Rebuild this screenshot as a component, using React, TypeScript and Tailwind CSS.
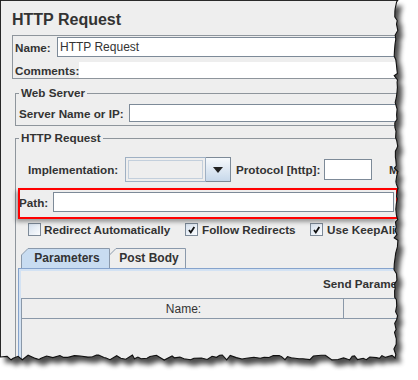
import React from 'react';

// torn-paper outline of the screenshot (right and bottom edges)
const makeTorn = () => {
  let s = 11;
  const rnd = () => {
    s = (s * 9301 + 49297) % 233280;
    return s / 233280;
  };
  const pts: string[] = ['M0 0', 'L398 0'];
  for (let y = 2; y < 355; y += 2 + rnd() * 5) {
    const x = 396 + (rnd() - 0.5) * 4 - (y > 330 ? 1 : 0);
    pts.push(`L${x.toFixed(1)} ${y.toFixed(1)}`);
  }
  pts.push('L395 358');
  for (let x = 392; x > 2; x -= 2 + rnd() * 6) {
    const y = 357.5 + (rnd() - 0.5) * 5;
    pts.push(`L${x.toFixed(1)} ${y.toFixed(1)}`);
  }
  pts.push('L0 357', 'Z');
  return pts.join(' ');
};

const TORN = makeTorn();

const TornEdge: React.FC = () => (
  <svg className="absolute inset-0 pointer-events-none" width={418} height={380}>
    <defs>
      <clipPath id="outside">
        <path clipRule="evenodd" d={`M0 0H418V380H0Z ${TORN}`} />
      </clipPath>
      <filter id="soft" x="-10%" y="-10%" width="120%" height="120%">
        <feGaussianBlur stdDeviation="2.6" />
      </filter>
    </defs>
    <g clipPath="url(#outside)">
      <rect width={418} height={380} fill="#fff" />
      <path d={TORN} transform="translate(5 6)" fill="#000" opacity={0.7} filter="url(#soft)" />
    </g>
    <path d={TORN} fill="none" stroke="#111" strokeWidth={1.1} />
  </svg>
);

const Check: React.FC<{ on?: boolean }> = ({ on }) => (
  <div className="w-[13px] h-[13px] border border-[#7d8a98] bg-gradient-to-br from-[#d6e1ee] to-[#fbfcfe] flex items-center justify-center shrink-0">
    {on && (
      <svg width="11" height="11" viewBox="0 0 11 11">
        <path d="M3 6 L4.8 8.5 L8.3 3" fill="none" stroke="#111" strokeWidth="1.8" />
      </svg>
    )}
  </div>
);

const Tab: React.FC<{ label: string; w: number; active?: boolean; className?: string }> = ({ label, w, active, className }) => (
  <div className={`relative h-[20px] flex items-center justify-center ${className ?? ''}`} style={{ width: w }}>
    <svg className="absolute inset-0" width={w} height={20}>
      <path
        d={`M0.5 20 L0.5 7 L7 0.5 L${w - 0.5} 0.5 L${w - 0.5} 20`}
        fill={active ? '#c8dcf1' : '#eeeeee'}
        stroke="#8a99ab"
      />
    </svg>
    <span className="relative pl-[3px] text-[12px] font-bold">{label}</span>
  </div>
);

export default function App() {
  return (
    <div className="relative w-[418px] h-[380px] bg-white overflow-hidden font-['Liberation_Sans',Arial,sans-serif] text-[#333]">
      <div className="w-[418px] h-[380px] bg-[#eeeeee] border-l border-t border-[#444]">
        <div className="pl-[11px] pt-[9px] text-[16px] font-bold leading-[20px]">HTTP Request</div>

        {/* Name / Comments */}
        <div className="ml-[11px] mt-[5px] border border-[#8e959c] text-[11.7px] font-bold">
          <div className="h-[21px] flex items-start">
            <div className="pl-[2px] pt-[5px] w-[44px] leading-[14px]">Name:</div>
            <div className="mt-[1px] h-[20px] flex-1 bg-white border border-[#7d8a98] pl-[2px] pt-[2px] text-[12px] font-normal leading-[14px]">
              HTTP Request
            </div>
          </div>
          <div className="h-[21px] flex items-start">
            <div className="pl-[2px] pt-[7px] w-[66px] leading-[14px]">Comments:</div>
            <div className="mt-[5px] h-[16px] flex-1 bg-white" />
          </div>
        </div>

        {/* Web Server */}
        <fieldset className="ml-[14px] mt-[7px] border border-[#8e959c] text-[11.7px] font-bold">
          <legend className="ml-[3px] px-[2px] leading-[14px]">Web Server</legend>
          <div className="flex items-start mt-[4px] pb-[3px]">
            <div className="pl-[3px] pt-[3px] w-[113px] leading-[14px]">Server Name or IP:</div>
            <div className="h-[18px] flex-1 bg-white border border-[#7d8a98]" />
          </div>
        </fieldset>

        {/* HTTP Request */}
        <fieldset className="ml-[14px] mt-[5px] border border-[#8e959c] text-[11.7px] font-bold h-[400px]">
          <legend className="ml-[3px] px-[2px] leading-[14px]">HTTP Request</legend>

          <div className="mt-[12px] pl-[12px] h-[25px] flex items-center whitespace-nowrap">
            <div className="w-[97px] leading-[14px]">Implementation:</div>
            <div className="w-[81px] h-[25px] border border-[#9fb0c3] bg-[#eeeeee] p-[2px]">
              <div className="w-full h-full border border-[#c3cfdc]" />
            </div>
            <div className="w-[25px] h-[25px] border border-l-0 border-[#7d8a98] bg-gradient-to-b from-[#f6f9fc] to-[#c7d8ea] flex items-center justify-center">
              <svg width="10" height="6" viewBox="0 0 10 6">
                <path d="M0 0H10L5 6Z" fill="#222" />
              </svg>
            </div>
            <div className="ml-[5px] w-[88px] leading-[14px]">Protocol [http]:</div>
            <div className="w-[48px] h-[21px] bg-white border border-[#7d8a98]" />
            <div className="ml-[17px] leading-[14px]">Method:</div>
          </div>

          <div className="relative mt-[10px] h-[20px] flex items-end">
            <div className="pl-[3px] w-[37px] leading-[14px] pb-[2px]">Path:</div>
            <div className="w-[341px] h-[20px] bg-white border border-[#7d8a98]" />
            <div className="absolute -top-[4px] left-[2px] w-[380px] h-[31px] border-2 border-[#ff0000] shadow-[-2px_3px_4px_rgba(0,0,0,0.35)]" />
          </div>

          <div className="mt-[10px] pl-[12px] h-[15px] flex items-center whitespace-nowrap">
            <div className="w-[157px] flex items-center gap-[3px]">
              <Check />
              <span className="leading-[14px]">Redirect Automatically</span>
            </div>
            <div className="w-[125px] flex items-center gap-[4px]">
              <Check on />
              <span className="leading-[14px]">Follow Redirects</span>
            </div>
            <div className="flex items-center gap-[4px]">
              <Check on />
              <span className="leading-[14px]">Use KeepAlive</span>
            </div>
          </div>

          <div className="mt-[11px] pl-[5px] flex">
            <Tab label="Parameters" w={89} active />
            <Tab label="Post Body" w={77} className="-ml-[1px]" />
          </div>

          <div className="ml-[2px] border-l border-t border-[#86a3cc] h-[200px]">
            <div className="border-l-2 border-t-2 border-[#d3e2f3] h-full">
              <div className="pt-[6px] pl-[302px] whitespace-nowrap leading-[14px]">Send Parameters With the Request:</div>
              <div className="mt-[7px] border-l border-t border-[#8a98a8] h-[100px]">
                <div className="h-[20px] flex border-b border-[#8a98a8] font-normal text-[12px]">
                  <div className="w-[322px] border-r border-[#8a98a8] flex items-center justify-center pl-[2px]">Name:</div>
                  <div className="flex-1" />
                </div>
              </div>
            </div>
          </div>
        </fieldset>
      </div>
      <TornEdge />
    </div>
  );
}
